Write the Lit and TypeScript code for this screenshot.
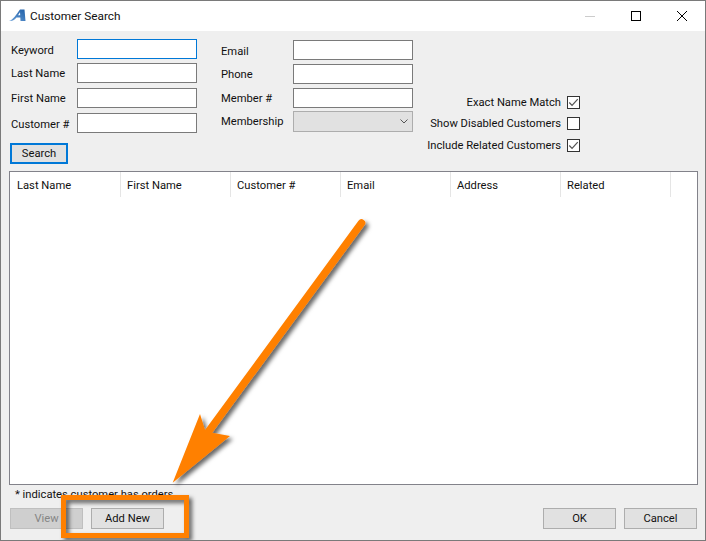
import { LitElement, html, css, svg } from "lit";
import { customElement } from "lit/decorators.js";

const check = svg`<svg class="tick" viewBox="0 0 13 13" width="11" height="11"><path d="M1.5 6.5 L4.8 10 L11.5 2.5" fill="none" stroke="#555" stroke-width="1.4"/></svg>`;

@customElement("app-root")
export class AppRoot extends LitElement {
  static styles = css`
    :host { display: block; width: 706px; height: 541px; font-family: Roboto, "Open Sans", sans-serif; font-size: 11.2px; color: #111; }
    * { box-sizing: border-box; }
    .window { position: relative; width: 706px; height: 541px; border: 1px solid #7a7a7a; background: #efefef; display: flex; flex-direction: column; overflow: hidden; }
    .title { height: 30px; background: #fff; display: flex; align-items: center; flex: none; }
    .logo { margin: -2px 0 0 8px; width: 17px; height: 13px; }
    .title span { margin-left: 4px; font-size: 11.8px; flex: 1; }
    .wc { width: 46px; display: flex; justify-content: center; }
    .form { height: 140px; flex: none; display: flex; padding: 8px 0 0 10px; }
    .col1 { width: 186px; }
    .grid1, .grid2 { display: grid; }
    .grid1 { grid-template-columns: 66px 120px; grid-template-rows: 24px 25px 25px 20px; align-items: start; }
    .grid2 { grid-template-columns: 72px 120px; grid-template-rows: 24px 24px 23px 21px; align-items: start; }
    .col2 { margin-left: 24px; padding-top: 1px; width: 192px; }
    label { line-height: 21px; white-space: nowrap; }
    .low { padding-top: 1px; }
    .input { height: 20px; background: #fff; border: 1px solid #7a7a7a; }
    .input.focus { border-color: #0078d7; }
    .select { height: 21px; background: #e1e1e1; border: 1px solid #adadad; display: flex; align-items: center; justify-content: flex-end; padding-right: 4px; }
    .btn { width: 73px; height: 21px; border: 1px solid #adadad; background: #e1e1e1; font-family: inherit; color: #111; padding: 0; display: flex; align-items: center; justify-content: center; }
    .btn.search { width: 58px; border: 2px solid #0078d7; margin: 10px 0 0 -1px; }
    .btn.off { background: #cfcfcf; border-color: #bfbfbf; color: #858585; }
    .col3 { width: 167px; padding-top: 57px; display: grid; grid-template-rows: 21px 22px 13px; justify-items: end; }
    .chk { display: flex; align-items: center; height: 13px; gap: 6px; white-space: nowrap; }
    .chk span { margin-top: -1px; }
    .box { width: 13px; height: 13px; border: 1px solid #333; background: #fff; display: flex; align-items: center; justify-content: center; }
    .table { margin-left: 8px; width: 689px; height: 314px; background: #fff; border: 1px solid #82828a; flex: none; }
    .head { display: flex; height: 25px; }
    .head div { width: 110px; padding: 1px 0 0 6px; line-height: 25px; border-right: 1px solid #e5e5e5; flex: none; }
    .head div:first-child { width: 111px; padding-left: 7px; }
    .note { margin-left: 14px; height: 23px; line-height: 20px; flex: none; }
    .bottom { display: flex; margin-left: 9px; width: 687px; gap: 8px; }
    .spacer { flex: 1; }
    .overlay { position: absolute; left: -1px; top: -1px; width: 706px; height: 541px; pointer-events: none; }
  `;

  private field(name: string, focus = false, low = false) {
    return html`<label class=${low ? "low" : ""}>${name}</label><div class="input ${focus ? "focus" : ""}"></div>`;
  }

  private chk(name: string, on: boolean) {
    return html`<div class="chk"><span>${name}</span><div class="box">${on ? check : ""}</div></div>`;
  }

  render() {
    const cols = ["Last Name", "First Name", "Customer #", "Email", "Address", "Related"];
    return html`<div class="window">
      <div class="title">
        <svg class="logo" viewBox="0 0 17 13"><defs><linearGradient id="lg" x1="0" y1="1" x2="1" y2="0"><stop offset="0" stop-color="#6aa0d8"/><stop offset="1" stop-color="#1f5fa8"/></linearGradient></defs><path d="M0 12 C4 11 7 6 11 0.5 L15.5 0.5 L16.5 12 L11.5 12 L11.3 8.5 L7.5 8.5 C6 10.5 3.5 12.5 0 12 Z M9 6.2 L11.2 6.2 L11 3.2 Z" fill="url(#lg)" fill-rule="evenodd"/></svg>
        <span>Customer Search</span>
        <div class="wc"><svg width="12" height="12"><path d="M1 6.5H11" stroke="#ccc"/></svg></div>
        <div class="wc"><svg width="12" height="12"><rect x="1.5" y="1.5" width="9" height="9" fill="none" stroke="#000"/></svg></div>
        <div class="wc"><svg width="12" height="12"><path d="M1 1L11 11M11 1L1 11" stroke="#000"/></svg></div>
      </div>
      <div class="form">
        <div class="col1">
          <div class="grid1">
            ${this.field("Keyword", true, true)}${this.field("Last Name")}${this.field("First Name")}${this.field("Customer #", false, true)}
          </div>
          <div class="btn search">Search</div>
        </div>
        <div class="col2">
          <div class="grid2">
            ${this.field("Email", false, true)}${this.field("Phone")}${this.field("Member #")}
            <label>Membership</label>
            <div class="select"><svg width="8" height="5"><path d="M0.5 0.5L4 4L7.5 0.5" fill="none" stroke="#555"/></svg></div>
          </div>
        </div>
        <div class="col3">
          ${this.chk("Exact Name Match", true)}${this.chk("Show Disabled Customers", false)}${this.chk("Include Related Customers", true)}
        </div>
      </div>
      <div class="table">
        <div class="head">${cols.map((c) => html`<div>${c}</div>`)}</div>
      </div>
      <div class="note">* indicates customer has orders</div>
      <div class="bottom">
        <div class="btn off">View</div>
        <div class="btn">Add New</div>
        <div class="spacer"></div>
        <div class="btn">OK</div>
        <div class="btn">Cancel</div>
      </div>
      <svg class="overlay" viewBox="0 0 706 541">
        <defs><filter id="s" x="-20%" y="-20%" width="140%" height="140%"><feDropShadow dx="3" dy="3" stdDeviation="2.2" flood-color="#000" flood-opacity=".6"/></filter></defs>
        <g filter="url(#s)">
          <path d="M361.5 223 L206 435" stroke="#ff8000" stroke-width="7.5" stroke-linecap="round" fill="none"/>
          <path d="M172.7 482.7 L200 414 L205.5 431.5 L230 436 Z" fill="#ff8000"/>
          <rect x="63.5" y="497.5" width="123" height="38" fill="none" stroke="#ff8000" stroke-width="5"/>
        </g>
      </svg>
    </div>`;
  }
}
